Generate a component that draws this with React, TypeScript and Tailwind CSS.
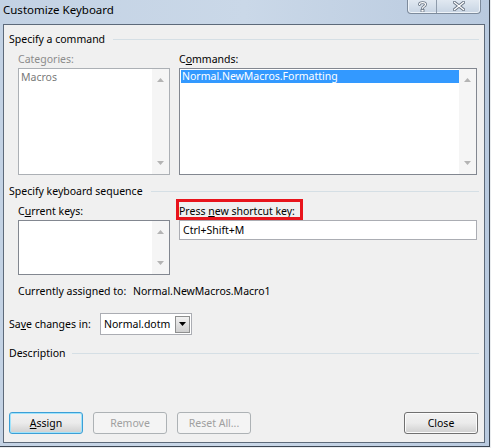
import React from "react";

const font = { fontFamily: '"Noto Sans", "Open Sans", sans-serif' };

function ScrollArrows() {
  return (
    <div className="w-[17px] h-full bg-[#f5f5f5] flex flex-col items-center justify-between py-[9px]">
      <svg width="7" height="4" viewBox="0 0 7 4"><path d="M0 4 L3.5 0 L7 4 Z" fill="#b4b4b4" /></svg>
      <svg width="7" height="4" viewBox="0 0 7 4"><path d="M0 0 L3.5 4 L7 0 Z" fill="#b4b4b4" /></svg>
    </div>
  );
}

function GroupHeading({ children, lineLeft }: { children: React.ReactNode; lineLeft?: string }) {
  return (
    <div className="flex items-center h-[16px] pr-[5px]">
      <span className="leading-[16px] text-black">{children}</span>
      <div className={"flex-1 h-px bg-[#d5dfe5] " + (lineLeft ?? "ml-[8px]")} />
    </div>
  );
}

function Btn({ children, kind }: { children: React.ReactNode; kind: "default" | "normal" | "disabled" }) {
  const cls =
    kind === "default"
      ? "border-[#3c9fd6] shadow-[inset_0_0_0_1px_#9fe3fb] text-black bg-gradient-to-b from-[#f2f2f2] via-[#ebebeb] to-[#cfcfcf]"
      : kind === "normal"
      ? "border-[#707070] shadow-[inset_0_0_0_1px_#fbfbfb] text-black bg-gradient-to-b from-[#f2f2f2] via-[#ebebeb] to-[#cfcfcf]"
      : "border-[#adb2b5] text-[#a0a0a0] bg-[#f4f4f4]";
  return (
    <div className={"w-[74px] h-[22px] rounded-[3px] border flex items-center justify-center leading-none " + cls}>
      {children}
    </div>
  );
}

export default function App() {
  return (
    <div className="w-[491px] h-[448px] bg-[#e9ecef] text-[10.5px]" style={font}>
      <div className="w-[490px] h-[447px] border-r border-b border-[#3b4552] bg-gradient-to-r from-[#c3d2e4] via-[#cad8e8] to-[#b9cadf] flex flex-col">
        {/* title bar */}
        <div className="h-[24px] flex items-start relative">
          <span className="ml-[3px] mt-[2px] text-[11.5px] leading-[16px] text-black">Customize Keyboard</span>
          <div className="ml-auto mr-[8px] mt-[-1px] flex h-[15px] rounded-b-[4px] border border-t-0 border-[#7d8b9c] overflow-hidden bg-gradient-to-b from-[#e3eaf2] to-[#c7d4e3] shadow-[inset_0_0_0_1px_#eef3f8]">
            <div className="w-[29px] flex items-center justify-center border-r border-[#8e9bab]">
              <svg width="9" height="11" viewBox="0 0 9 11">
                <path d="M1.5 3.5 C1.5 1 7.5 1 7.5 3.5 C7.5 5.5 4.5 5.3 4.5 7.2" fill="none" stroke="#6a7584" strokeWidth="2.8" strokeLinecap="round" />
                <path d="M1.5 3.5 C1.5 1 7.5 1 7.5 3.5 C7.5 5.5 4.5 5.3 4.5 7.2" fill="none" stroke="#ffffff" strokeWidth="1.1" strokeLinecap="round" />
                <rect x="3" y="8.5" width="3" height="2.5" fill="#ffffff" stroke="#6a7584" strokeWidth="0.8" />
              </svg>
            </div>
            <div className="w-[43px] flex items-center justify-center">
              <svg width="12" height="10" viewBox="0 0 12 10">
                <path d="M1.5 1.5 L10.5 8.5 M10.5 1.5 L1.5 8.5" stroke="#6a7584" strokeWidth="3.2" strokeLinecap="square" />
                <path d="M1.5 1.5 L10.5 8.5 M10.5 1.5 L1.5 8.5" stroke="#ffffff" strokeWidth="1.3" strokeLinecap="square" />
              </svg>
            </div>
          </div>
        </div>

        {/* client area */}
        <div className="ml-[3px] w-[482px] h-[419px] border border-[#5d6a7a] bg-[#f0f0f0] flex flex-col pl-[5px] pt-[6px] pb-[8px]">
          <GroupHeading>Specify a command</GroupHeading>

          <div className="flex mt-[4px] ml-[9px] gap-[9px]">
            <div className="w-[152px] flex flex-col">
              <span className="leading-[16px] text-[#8c8c8c]">Categories:</span>
              <div className="mt-[1px] h-[107px] border border-[#acb0b5] bg-white flex">
                <div className="flex-1 pl-[2px] pt-[2px] leading-[13px] text-[#7a7a7a]">Macros</div>
                <ScrollArrows />
              </div>
            </div>
            <div className="w-[298px] flex flex-col">
              <span className="leading-[16px] text-black">
                C<span className="underline">o</span>mmands:
              </span>
              <div className="mt-[1px] h-[107px] border border-[#828790] bg-white flex">
                <div className="flex-1 pl-[1px] pt-[1px]">
                  <div className="bg-[#3399ff] text-white leading-[13px] pl-[1px]">Normal.NewMacros.Formatting</div>
                </div>
                <ScrollArrows />
              </div>
            </div>
          </div>

          <div className="mt-[8px]">
            <GroupHeading>Specify keyboard sequence</GroupHeading>
          </div>

          <div className="flex mt-[4px] ml-[9px] gap-[9px]">
            <div className="w-[152px] flex flex-col">
              <span className="leading-[16px] text-black">
                C<span className="underline">u</span>rrent keys:
              </span>
              <div className="mt-[1px] h-[55px] border border-[#828790] bg-white flex">
                <div className="flex-1" />
                <ScrollArrows />
              </div>
            </div>
            <div className="w-[298px] flex flex-col">
              <div className="relative leading-[16px] text-black">
                Press <span className="underline">n</span>ew shortcut key:
                <div className="absolute left-[-3px] top-[-4px] w-[127px] h-[21px] border-[3px] border-[#e8141c]" />
              </div>
              <div className="mt-[1px] h-[20px] border border-[#abadb3] bg-white pl-[3px] flex items-center leading-none text-black">
                Ctrl+Shift+M
              </div>
            </div>
          </div>

          <div className="mt-[8px] ml-[9px] flex leading-[16px] text-black">
            <span className="w-[115px]">Currently assigned to:</span>
            <span>Normal.NewMacros.Macro1</span>
          </div>

          <div className="mt-[14px] flex items-center text-black">
            <span className="w-[91px] leading-[16px]">
              Sa<span className="underline">v</span>e changes in:
            </span>
            <div className="w-[92px] h-[22px] border border-[#abadb3] bg-white flex items-center pl-[3px]">
              <span className="flex-1 leading-none">Normal.dotm</span>
              <div className="w-[15px] h-[17px] mr-[1px] border border-[#8e8f8f] bg-gradient-to-b from-[#f2f2f2] to-[#cfcfcf] flex items-center justify-center">
                <svg width="7" height="4" viewBox="0 0 7 4"><path d="M0 0 L3.5 4 L7 0 Z" fill="#000" /></svg>
              </div>
            </div>
          </div>

          <div className="mt-[10px]">
            <GroupHeading lineLeft="ml-[6px]">Description</GroupHeading>
          </div>

          <div className="mt-auto flex pr-[6px] gap-[10px]">
            <Btn kind="default">
              <span><span className="underline">A</span>ssign</span>
            </Btn>
            <Btn kind="disabled">Remove</Btn>
            <Btn kind="disabled">Reset All...</Btn>
            <div className="ml-auto">
              <Btn kind="normal">Close</Btn>
            </div>
          </div>
        </div>
      </div>
    </div>
  );
}
